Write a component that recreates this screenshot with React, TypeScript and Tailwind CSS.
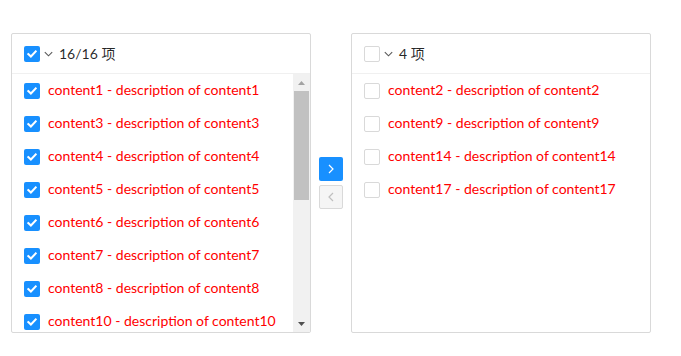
const leftKeys = [1, 3, 4, 5, 6, 7, 8, 10, 11, 12, 13, 15, 16, 18, 19, 20];
const rightKeys = [2, 9, 14, 17];

function Checkbox({ checked }: { checked: boolean }) {
  if (checked) {
    return (
      <span className="flex h-4 w-4 shrink-0 items-center justify-center rounded-[2px] bg-[#1890ff]">
        <svg width="10" height="8" viewBox="0 0 10 8" fill="none">
          <path d="M1.3 4.1 L3.9 6.5 L8.7 1.5" stroke="white" strokeWidth="2" strokeLinecap="square" />
        </svg>
      </span>
    );
  }
  return <span className="h-4 w-4 shrink-0 rounded-[2px] border border-[#d9d9d9] bg-white" />;
}

function Chevron() {
  return (
    <svg width="9" height="10" viewBox="0 0 9 10" fill="none" className="ml-1 mr-[6px]">
      <path d="M0.8 3.2 L4.5 6.8 L8.2 3.2" stroke="#595959" strokeWidth="1.1" />
    </svg>
  );
}

function Item({ n, checked }: { n: number; checked: boolean }) {
  return (
    <div className="flex h-[33px] shrink-0 items-center gap-2 px-3">
      <Checkbox checked={checked} />
      <span className="whitespace-nowrap pb-[2px] text-[#ff0000]">
        content{n} - description of content{n}
      </span>
    </div>
  );
}

function Panel({ keys, checked, label }: { keys: number[]; checked: boolean; label: string }) {
  return (
    <div className="flex h-[300px] w-[300px] flex-col rounded-[2px] border border-[#d9d9d9] bg-white">
      <div className="flex h-10 shrink-0 items-center border-b border-[#f0f0f0] px-3 text-[rgba(0,0,0,0.85)]">
        <Checkbox checked={checked} />
        <Chevron />
        <span className="pb-px">{label}</span>
      </div>
      <div className="flex min-h-0 flex-1">
        <div className="flex min-w-0 flex-1 flex-col overflow-hidden">
          {keys.map((k) => (
            <Item key={k} n={k} checked={checked} />
          ))}
        </div>
        {checked && (
          <div className="flex w-[17px] shrink-0 flex-col items-center bg-[#f1f1f1]">
            <div className="flex h-[17px] w-full items-center justify-center">
              <svg width="7" height="4" viewBox="0 0 7 4">
                <path d="M0 4 L3.5 0 L7 4 Z" fill="#a3a3a3" />
              </svg>
            </div>
            <div className="h-[109px] w-[15px] bg-[#c1c1c1]" />
            <div className="flex-1" />
            <div className="flex h-[17px] w-full items-center justify-center">
              <svg width="7" height="4" viewBox="0 0 7 4">
                <path d="M0 0 L7 0 L3.5 4 Z" fill="#505050" />
              </svg>
            </div>
          </div>
        )}
      </div>
    </div>
  );
}

export default function App() {
  return (
    <div
      className="h-[356px] w-[681px] bg-white pl-[11px] pt-[33px] text-[14px]"
      style={{ fontFamily: 'Lato, "Noto Sans CJK SC", sans-serif' }}
    >
      <div className="flex items-center">
        <Panel keys={leftKeys} checked={true} label="16/16 项" />
        <div className="mx-2 flex flex-col gap-1">
          <button className="flex h-6 w-6 items-center justify-center rounded-[2px] bg-[#1890ff]">
            <svg width="8" height="10" viewBox="0 0 8 10" fill="none">
              <path d="M2 1 L6 5 L2 9" stroke="white" strokeWidth="1.2" />
            </svg>
          </button>
          <button className="flex h-6 w-6 items-center justify-center rounded-[2px] border border-[#d9d9d9] bg-[#f5f5f5]">
            <svg width="8" height="10" viewBox="0 0 8 10" fill="none">
              <path d="M6 1 L2 5 L6 9" stroke="#bfbfbf" strokeWidth="1.2" />
            </svg>
          </button>
        </div>
        <Panel keys={rightKeys} checked={false} label="4 项" />
      </div>
    </div>
  );
}
